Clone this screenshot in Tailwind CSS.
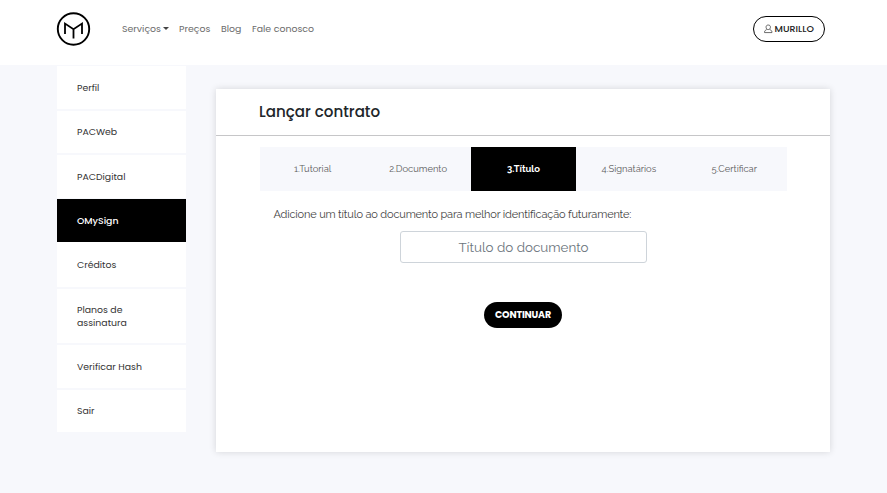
<!DOCTYPE html>
<html lang="pt-BR">
<head>
<meta charset="utf-8">
<title>Lançar contrato</title>
<script src="https://cdn.jsdelivr.net/npm/@tailwindcss/browser@4"></script>
</head>
<body class="h-[493px] overflow-hidden bg-[#f7f8fc] font-[Poppins,Inter,sans-serif] text-[#212529]">
<header class="flex h-[65px] items-start bg-white pl-[56px] pr-[62px]">
  <svg class="mt-[11px] h-[35px] w-[35px] shrink-0" viewBox="0 0 35 35" fill="none" stroke="#000">
    <circle cx="17.5" cy="18" r="15.7" stroke-width="1.9"/>
    <path d="M9 23V12.6L17.5 18.2L26 12.6V23M17.5 18.2V27.6" stroke-width="1.8"/>
  </svg>
  <nav class="mt-[22px] flex pl-[31px] text-[9.4px] leading-[14px] whitespace-nowrap text-[#6b6b6b]">
    <a class="flex w-[57px]">Serviços<span class="mt-[5px] ml-[2px] h-0 w-0 border-x-[3px] border-t-[3px] border-x-transparent border-t-[#444]"></span></a>
    <a class="w-[42px]">Preços</a>
    <a class="w-[31px]">Blog</a>
    <a>Fale conosco</a>
  </nav>
  <button class="mt-[16px] ml-auto flex h-[26px] w-[72px] items-center rounded-full border border-black pl-[10px] text-[9.5px] font-medium text-[#222]">
    <svg class="mr-[2px] h-[10px] w-[8.5px] shrink-0" viewBox="0 0 9 10" fill="none" stroke="#222" stroke-width=".7"><path d="M4.5 .8C2.9 .8 2.1 1.8 2.2 3.2C2.3 4.7 3.2 5.6 4.5 5.6S6.7 4.7 6.8 3.2C6.9 1.8 6.1 .8 4.5 .8ZM3 5.3C2.8 6.2 .6 6.3 .6 7.8V8.8H8.4V7.8C8.4 6.3 6.2 6.2 6 5.3"/></svg>
    MURILLO
  </button>
</header>
<div class="flex pl-[57px]">
  <aside class="mt-px flex w-[129px] flex-col gap-[2px] text-[9.35px] leading-[13px] text-[#333]">
    <a class="flex h-[43px] items-center bg-white pl-5">Perfil</a>
    <a class="flex h-[42px] items-center bg-white pb-px pl-5">PACWeb</a>
    <a class="flex h-[43px] items-center bg-white pl-5">PACDigital</a>
    <a class="-mt-px flex h-[43px] items-center bg-black pl-5 font-medium text-white">OMySign</a>
    <a class="-mt-[2px] flex h-[45px] items-center bg-white pl-5">Créditos</a>
    <a class="flex h-[54px] items-center bg-white pl-5"><span>Planos de<br>assinatura</span></a>
    <a class="flex h-[43px] items-center bg-white pl-5">Verificar Hash</a>
    <a class="flex h-[42px] items-center bg-white pb-px pl-5">Sair</a>
  </aside>
  <main class="mt-[24px] ml-[30px] h-[363px] w-[614px] bg-white font-[Raleway,Lato,sans-serif] shadow-[0_0_7px_rgba(0,0,0,0.14)]">
    <h1 class="flex h-[47px] items-center border-b border-[#c6c6c8] pl-[43px] font-[Poppins,Inter,sans-serif] text-[15.1px] font-medium">Lançar contrato</h1>
    <ol class="mt-[11px] ml-[44px] grid h-[44px] w-[527px] grid-cols-5 bg-[#f7f8fc] text-[9.4px] text-[#5c5c5c]">
      <li class="flex items-center justify-center">1.Tutorial</li>
      <li class="flex items-center justify-center">2.Documento</li>
      <li class="flex items-center justify-center bg-black font-bold text-white">3.Título</li>
      <li class="flex items-center justify-center">4.Signatários</li>
      <li class="flex items-center justify-center">5.Certificar</li>
    </ol>
    <label class="mt-[15px] block pl-[57.5px] text-[11px] leading-[17px] tracking-[-0.17px] text-[#444]">Adicione um título ao documento para melhor identificação futuramente:</label>
    <input class="mt-[8px] ml-[184px] block h-[32px] w-[247px] rounded-[3px] border border-[#ced4da] text-center text-[13.4px] placeholder:text-[#6c757d]" placeholder="Título do documento">
    <button class="mt-[39px] ml-[268px] block h-[26px] w-[78px] rounded-full bg-black font-[Poppins,Inter,sans-serif] text-[9.5px] font-bold tracking-[-0.15px] text-white">CONTINUAR</button>
  </main>
</div>
</body>
</html>
